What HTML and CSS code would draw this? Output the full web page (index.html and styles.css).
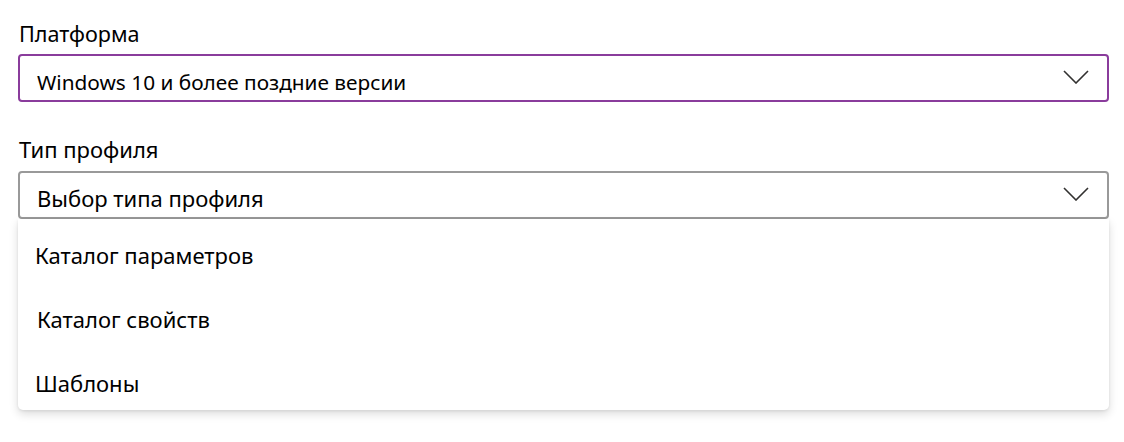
FILE: index.html
```html
<!DOCTYPE html>
<html lang="ru">
<head>
<meta charset="utf-8">
<link rel="stylesheet" href="styles.css">
</head>
<body>
<div class="page">
  <div class="field field-platform">
    <div class="label label-top">Платформа</div>
    <div class="select select-active">
      <span class="value value-top">Windows 10 и более поздние версии</span>
      <svg class="chevron" width="26" height="14" viewBox="0 0 26 14"><path d="M1 1 L13 13 L25 1" fill="none" stroke="#323130" stroke-width="1.6"/></svg>
    </div>
  </div>
  <div class="field field-profile">
    <div class="label label-bottom">Тип профиля</div>
    <div class="select select-open">
      <span class="value value-bottom">Выбор типа профиля</span>
      <svg class="chevron" width="26" height="14" viewBox="0 0 26 14"><path d="M1 1 L13 13 L25 1" fill="none" stroke="#323130" stroke-width="1.6"/></svg>
    </div>
    <ul class="menu">
      <li class="item">Каталог параметров</li>
      <li class="item item-shift">Каталог свойств</li>
      <li class="item">Шаблоны</li>
    </ul>
  </div>
</div>
</body>
</html>
```
FILE: styles.css
```css
* { box-sizing: border-box; }
html, body { margin: 0; padding: 0; background: #fff; }
body { font-family: "Noto Sans", "Open Sans", sans-serif; color: #000; width: 1124px; height: 442px; overflow: hidden; }
.page { padding: 20px 15px 0 18px; display: flex; flex-direction: column; }
.label { padding-left: 1px; line-height: 28px; }
.label-top { font-size: 21.6px; height: 34px; }
.label-bottom { font-size: 22px; height: 38px; padding-top: 2px; }
.select { height: 48px; display: flex; align-items: center; justify-content: space-between; padding: 0 18px 0 17px; border-radius: 4px; }
.select-active { border: 2px solid #8a3c9c; }
.select-open { border: 2px solid #999; }
.value { padding-top: 6px; }
.value-top { font-size: 20.8px; padding-top: 8px; }
.value-bottom { font-size: 22px; }
.chevron { display: block; margin-top: -2px; }
.field-profile { margin-top: 31px; position: relative; }
.menu { list-style: none; margin: 0; padding: 4px 0 0; background: #fff; height: 191px; overflow: hidden; border-radius: 0 0 5px 5px; box-shadow: 0 4px 10px rgba(0,0,0,0.14), 0 1px 3px rgba(0,0,0,0.08); }
.item { height: 64px; flex-shrink: 0; display: flex; align-items: center; padding-left: 17px; font-size: 22px; }
.item-shift { padding-left: 19px; }
```
